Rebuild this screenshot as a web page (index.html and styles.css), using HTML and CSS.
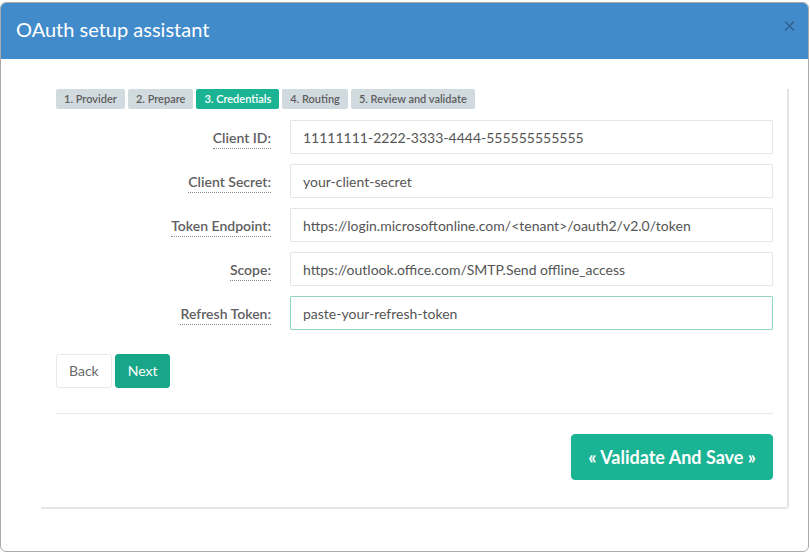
FILE: index.html
```html
<!DOCTYPE html>
<html lang="en">
<head>
  <meta charset="UTF-8" />
  <meta name="viewport" content="width=device-width, initial-scale=1.0"/>
  <title>OAuth setup assistant</title>
  <link rel="stylesheet" href="styles.css">
</head>
<body>
  <div class="modal">
    <div class="modal-header">
      <h4 class="modal-title">OAuth setup assistant</h4>
      <button class="close" type="button" aria-label="Close">
        <svg width="11" height="10" viewBox="0 0 11 10">
          <path d="M1 0.5 L10 9.5 M10 0.5 L1 9.5" stroke="currentColor" stroke-width="1.6" fill="none"/>
        </svg>
      </button>
    </div>

    <div class="modal-body">
      <div class="panel">
        <div class="steps">
          <span class="step">1. Provider</span>
          <span class="step">2. Prepare</span>
          <span class="step active">3. Credentials</span>
          <span class="step">4. Routing</span>
          <span class="step">5. Review and validate</span>
        </div>

        <form class="form">
          <label><abbr title="Application (client) ID">Client ID:</abbr></label>
          <input type="text" value="11111111-2222-3333-4444-555555555555" />

          <label><abbr title="Client secret value">Client Secret:</abbr></label>
          <input type="text" value="your-client-secret" />

          <label><abbr title="OAuth2 token endpoint">Token Endpoint:</abbr></label>
          <input type="text" value="https://login.microsoftonline.com/<tenant>/oauth2/v2.0/token" />

          <label><abbr title="Requested scopes">Scope:</abbr></label>
          <input type="text" value="https://outlook.office.com/SMTP.Send offline_access" />

          <label><abbr title="Refresh token">Refresh Token:</abbr></label>
          <input type="text" class="focused" value="paste-your-refresh-token" />
        </form>

        <div class="actions">
          <button class="btn" type="button">Back</button>
          <button class="btn btn-primary" type="button">Next</button>
        </div>

        <hr>

        <div class="save">
          <button class="btn btn-save" type="button">« Validate And Save »</button>
        </div>
      </div>
    </div>
  </div>
</body>
</html>
```

FILE: styles.css
```css
* {
  box-sizing: border-box;
}

body {
  margin: 0;
  padding-top: 2px;
  font-family: Lato, "Open Sans", sans-serif;
  background-color: #fff;
  color: #676a6c;
}

.modal {
  width: 809px;
  height: 550px;
  border: 1px solid #aaa;
  border-radius: 6px;
  overflow: hidden;
  background-color: #fff;
}

.modal-header {
  display: flex;
  justify-content: space-between;
  align-items: flex-start;
  height: 56px;
  padding: 15px 13px 0 15px;
  background-color: #428bca;
}

.modal-title {
  margin: 0;
  font-size: 20px;
  font-weight: 400;
  line-height: 22px;
  color: #fff;
}

.close {
  margin-top: 3px;
  padding: 0;
  border: none;
  background: none;
  color: rgba(0, 0, 0, 0.28);
  line-height: 0;
  cursor: pointer;
}

.modal-body {
  padding: 30px 19px 0 40px;
}

.panel {
  padding: 0 14px 27px 15px;
  border-right: 2px solid #e5e5e5;
  border-bottom: 2px solid #e5e5e5;
  border-bottom-right-radius: 3px;
}

.steps {
  display: flex;
  gap: 3px;
}

.step {
  padding: 3px 8px;
  font-size: 11px;
  font-weight: 600;
  line-height: 14px;
  color: #5e5e5e;
  background-color: #d1dade;
  border-radius: 2px;
}

.step.active {
  color: #fff;
  background-color: #1ab394;
}

.form {
  display: grid;
  grid-template-columns: 215px 1fr;
  column-gap: 19px;
  row-gap: 10px;
  align-items: center;
  margin-top: 11px;
}

.form label {
  text-align: right;
  font-size: 14px;
  font-weight: 600;
  color: #5f6061;
}

abbr {
  text-decoration: none;
  border-bottom: 1px dotted #888;
  padding-bottom: 2px;
  cursor: help;
}

.form input {
  width: 100%;
  height: 34px;
  padding: 6px 12px;
  font-family: Lato, "Open Sans", sans-serif;
  font-size: 14px;
  color: #555;
  border: 1px solid #e5e6e7;
  border-radius: 1px;
  outline: none;
}

.form input.focused {
  border-color: #93d6c6;
}

.actions {
  display: flex;
  gap: 3px;
  margin-top: 24px;
}

.btn {
  padding: 6px 12px;
  font-family: Lato, "Open Sans", sans-serif;
  font-size: 14px;
  line-height: 20px;
  color: #676a6c;
  background-color: #fff;
  border: 1px solid #e7eaec;
  border-radius: 3px;
  cursor: pointer;
}

.btn-primary {
  color: #fff;
  background-color: #18a689;
  border-color: #18a689;
}

hr {
  margin: 25px 0 0;
  border: 0;
  border-top: 1px solid #e7eaec;
}

.save {
  display: flex;
  justify-content: flex-end;
  margin-top: 20px;
}

.btn-save {
  padding: 10px 16px;
  font-size: 18px;
  font-weight: 700;
  line-height: 24px;
  color: #fff;
  background-color: #1ab394;
  border-color: #1ab394;
  border-radius: 4px;
}
```
